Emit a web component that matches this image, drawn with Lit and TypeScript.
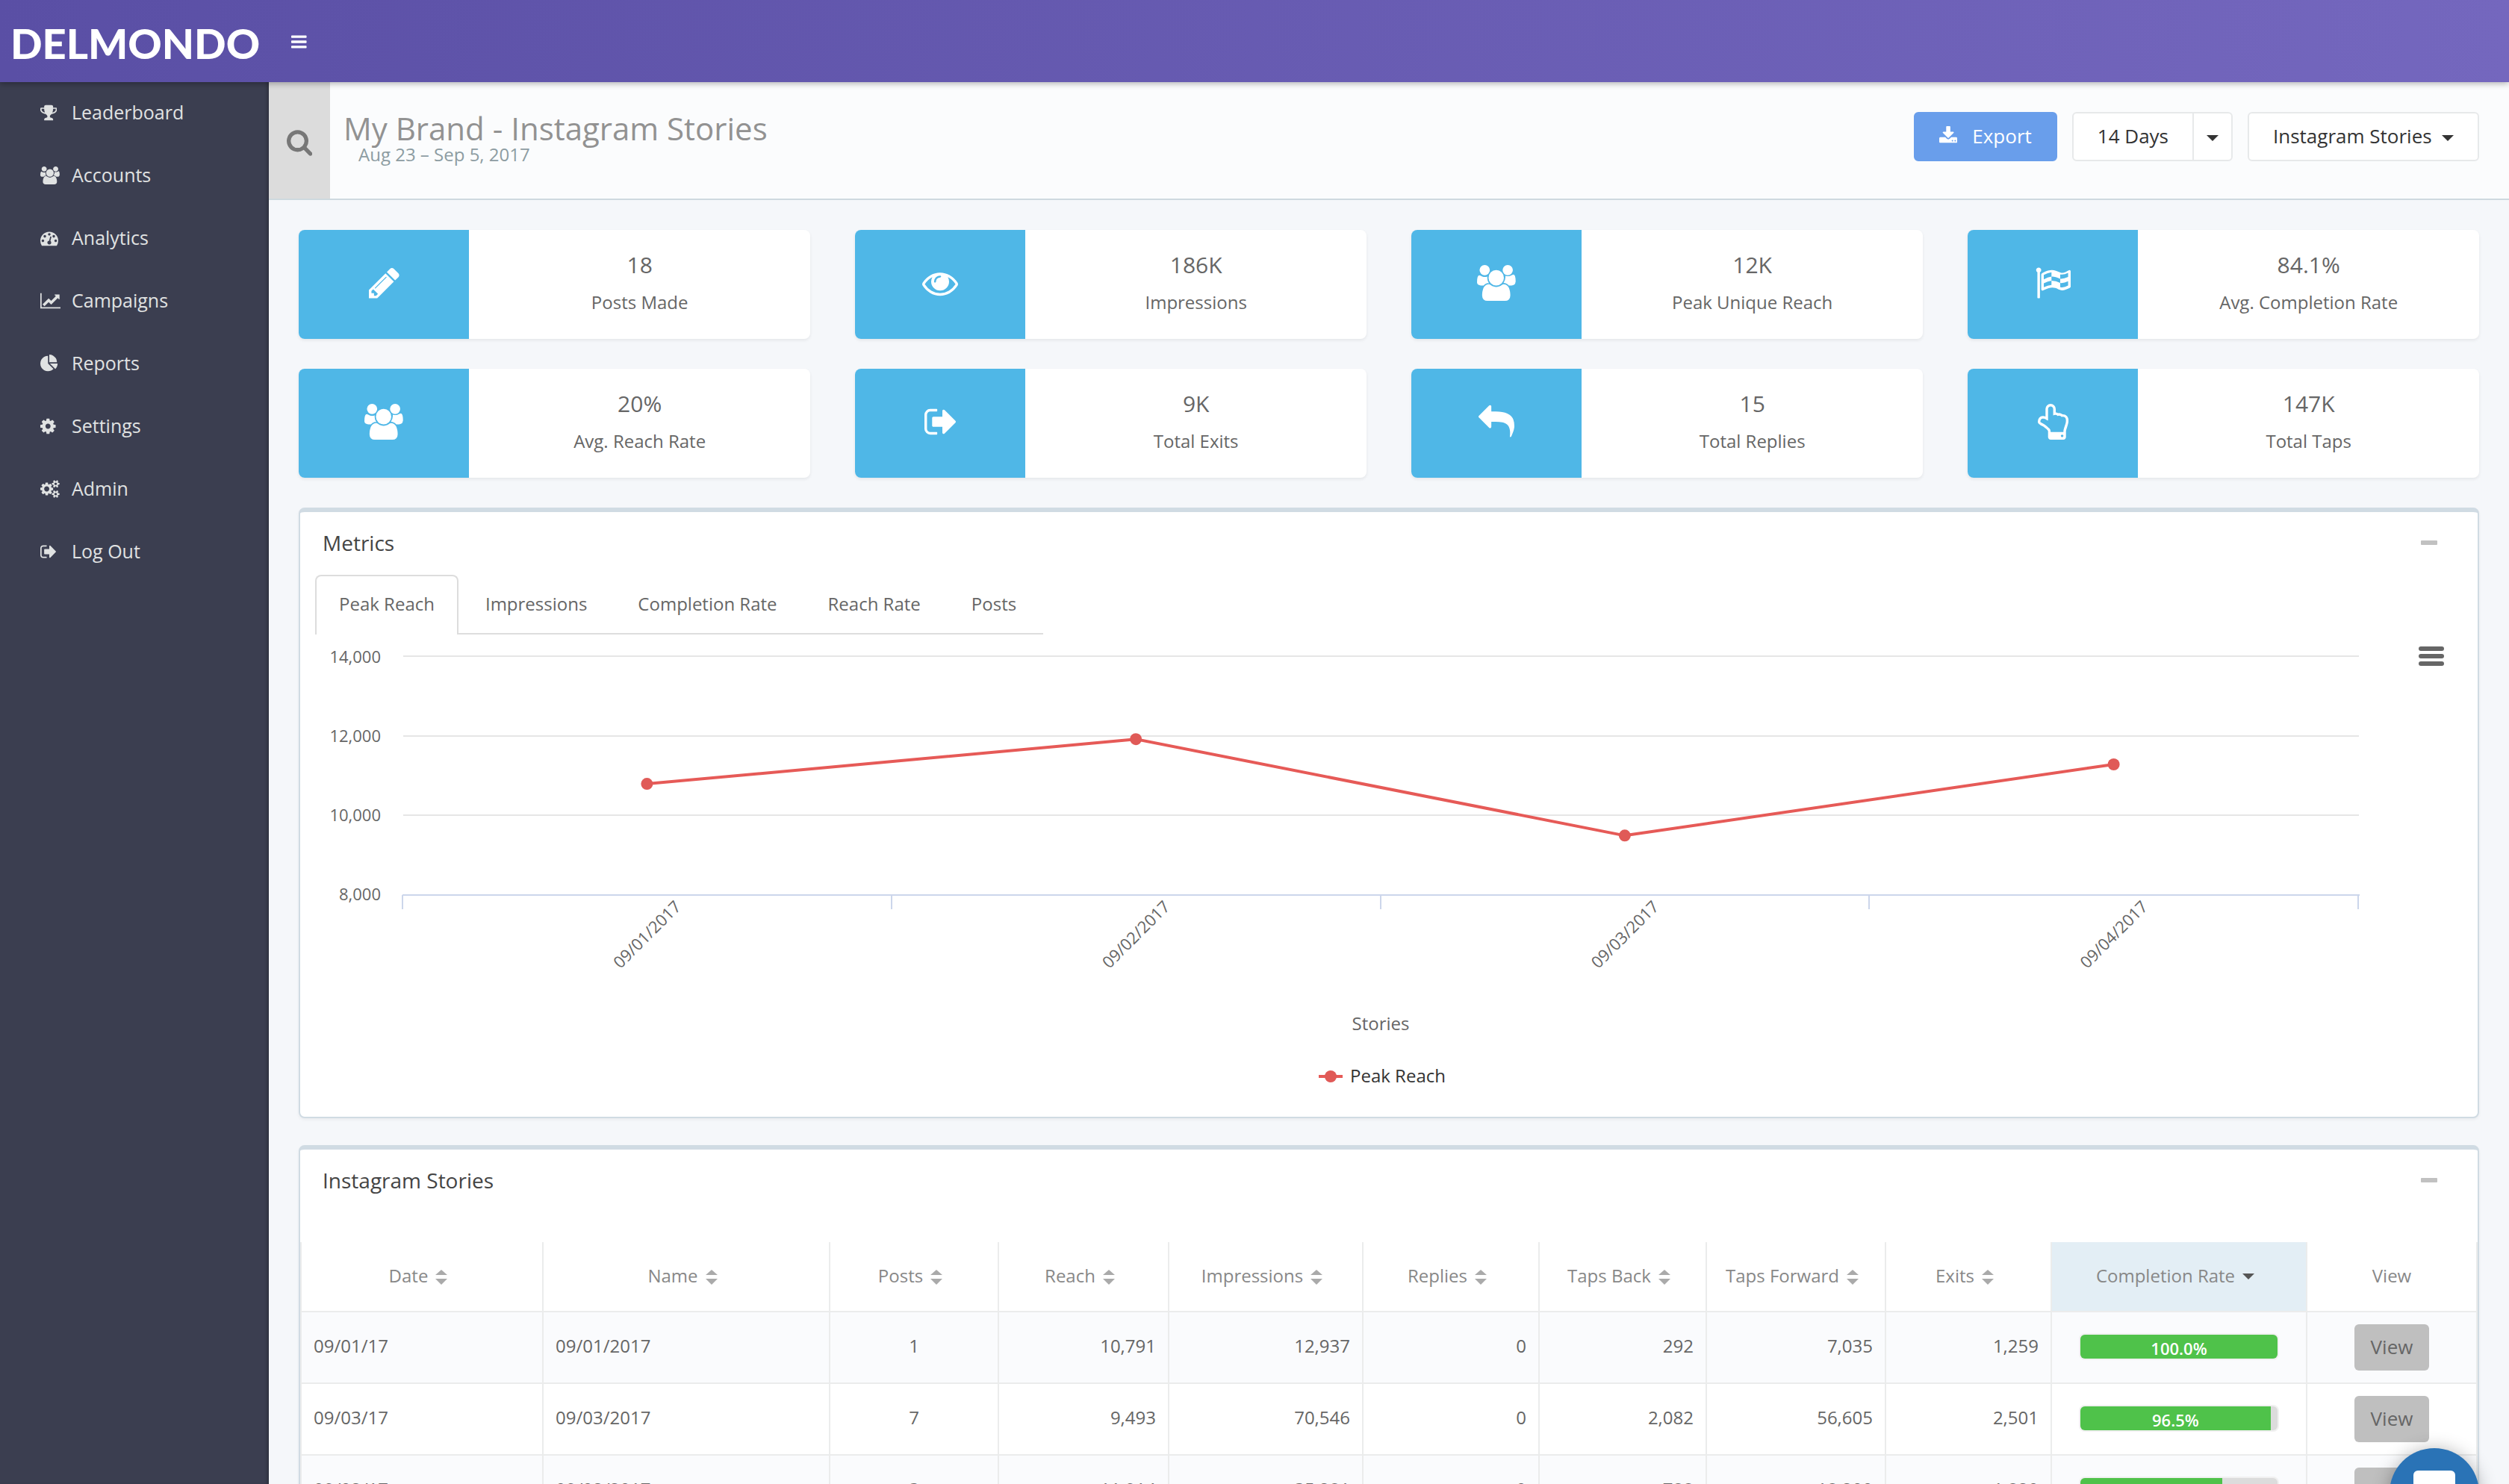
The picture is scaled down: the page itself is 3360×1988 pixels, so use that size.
import { LitElement, html, svg, css, nothing } from "lit";
import { customElement, property, state } from "lit/decorators.js";
import { classMap } from "lit/directives/class-map.js";

interface Glyph {
  box: string;
  path: string;
  cut?: string;
}

const GLYPHS: Record<string, Glyph> = {
  trophy: {
    box: "64 0 1664 1792",
    path: "M522 883q-74-162-74-371h-256v96q0 78 94.5 162t235.5 113zm1078-275v-96h-256q0 209-74 371 141-29 235.5-113t94.5-162zm128-128v128q0 71-41.5 143t-112 130-173 97.5-215.5 44.5q-42 54-95 95-38 34-52.5 72.5t-14.5 89.5q0 54 30.5 91t97.5 37q75 0 133.5 45.5t58.5 114.5v64q0 14-9 23t-23 9h-832q-14 0-23-9t-9-23v-64q0-69 58.5-114.5t133.5-45.5q67 0 97.5-37t30.5-91q0-51-14.5-89.5t-52.5-72.5q-53-41-95-95-113-5-215.5-44.5t-173-97.5-112-130-41.5-143v-128q0-40 28-68t68-28h288v-96q0-66 47-113t113-47h576q66 0 113 47t47 113v96h288q40 0 68 28t28 68z",
  },
  users: {
    box: "64 0 1920 1792",
    path: "M657 896q-162 5-265 128h-134q-82 0-138-40.5t-56-118.5q0-353 124-353 6 0 43.5 21t97.5 42.5 119 21.5q67 0 133-23-5 37-5 66 0 159 93 293zm1071 637q0 120-73 189.5t-194 69.5h-874q-121 0-194-69.5t-73-189.5q0-53 3.5-103.5t14-109 26.5-108.5 43-97.5 62-81 85.5-53.5 111.5-20q10 0 43 21.5t73 48 107 48 135 21.5 135-21.5 107-48 73-48 43-21.5q61 0 111.5 20t85.5 53.5 62 81 43 97.5 26.5 108.5 14 109 3.5 103.5zm-1024-1277q0 106-75 181t-181 75-181-75-75-181 75-181 181-75 181 75 75 181zm704 384q0 159-112.5 271.5t-271.5 112.5-271.5-112.5-112.5-271.5 112.5-271.5 271.5-112.5 271.5 112.5 112.5 271.5zm576 225q0 78-56 118.5t-138 40.5h-134q-103-123-265-128 93-134 93-293 0-29-5-66 66 23 133 23 59 0 119-21.5t97.5-42.5 43.5-21q124 0 124 353zm-128-609q0 106-75 181t-181 75-181-75-75-181 75-181 181-75 181 75 75 181z",
  },
  gauge: {
    box: "0 0 1792 1792",
    path: "M384 1152q0-53-37.5-90.5t-90.5-37.5-90.5 37.5-37.5 90.5 37.5 90.5 90.5 37.5 90.5-37.5 37.5-90.5zm192-448q0-53-37.5-90.5t-90.5-37.5-90.5 37.5-37.5 90.5 37.5 90.5 90.5 37.5 90.5-37.5 37.5-90.5zm428 481l101-382q6-26-7.5-48.5t-38.5-29.5-48 6.5-30 39.5l-101 382q-60 5-107 43.5t-63 98.5q-20 77 20 146t117 89 146-20 89-117q16-60-6-117t-72-91zm660-33q0-53-37.5-90.5t-90.5-37.5-90.5 37.5-37.5 90.5 37.5 90.5 90.5 37.5 90.5-37.5 37.5-90.5zm-640-640q0-53-37.5-90.5t-90.5-37.5-90.5 37.5-37.5 90.5 37.5 90.5 90.5 37.5 90.5-37.5 37.5-90.5zm448 192q0-53-37.5-90.5t-90.5-37.5-90.5 37.5-37.5 90.5 37.5 90.5 90.5 37.5 90.5-37.5 37.5-90.5zm320 448q0 261-141 483-19 29-54 29h-1402q-35 0-54-29-141-221-141-483 0-182 71-348t191-286 286-191 348-71 348 71 286 191 191 286 71 348z",
  },
  chart: {
    box: "0 0 2048 1792",
    path: "M2048 1536v128h-2048v-1536h128v1408h1920zm-128-1248v435q0 21-19.5 29.5t-35.5-7.5l-121-121-633 633q-10 10-23 10t-23-10l-233-233-416 416-192-192 585-585q10-10 23-10t23 10l233 233 464-464-121-121q-16-16-7.5-35.5t29.5-19.5h435q14 0 23 9t9 23z",
  },
  pie: {
    box: "0 0 1792 1792",
    path: "M768 890l546 546q-106 108-247.5 168t-298.5 60q-209 0-385.5-103t-279.5-279.5-103-385.5 103-385.5 279.5-279.5 385.5-103v762zm187 6h773q0 157-60 298.5t-168 247.5zm709-128h-768v-768q209 0 385.5 103t279.5 279.5 103 385.5z",
  },
  cog: {
    box: "128 0 1536 1792",
    path: "M1152 896q0-106-75-181t-181-75-181 75-75 181 75 181 181 75 181-75 75-181zm512-109v222q0 12-8 23t-20 13l-185 28q-19 54-39 91 35 50 107 138 10 12 10 25t-9 23q-27 37-99 108t-94 71q-12 0-26-9l-138-108q-44 23-91 38-16 136-29 186-7 28-36 28h-222q-14 0-24.5-8.5t-11.5-21.5l-28-184q-49-16-90-37l-141 107q-10 9-25 9-14 0-25-11-126-114-165-168-7-10-7-23 0-12 8-23 15-21 51-66.5t54-70.5q-27-50-41-99l-183-27q-13-2-21-12.5t-8-23.5v-222q0-12 8-23t19-13l186-28q14-46 39-92-40-57-107-138-10-12-10-24 0-10 9-23 26-36 98.5-107.5t94.5-71.5q13 0 26 10l138 107q44-23 91-38 16-136 29-186 7-28 36-28h222q14 0 24.5 8.5t11.5 21.5l28 184q49 16 90 37l142-107q9-9 24-9 13 0 25 10 129 119 165 170 7 8 7 22 0 12-8 23-15 21-51 66.5t-54 70.5q26 50 41 98l183 28q13 2 21 12.5t8 23.5z",
  },
  cogs: {
    box: "0 0 1920 1792",
    path: "M896 896q0-106-75-181t-181-75-181 75-75 181 75 181 181 75 181-75 75-181zm768 512q0-52-38-90t-90-38-90 38-38 90q0 53 37.5 90.5t90.5 37.5 90.5-37.5 37.5-90.5zm0-1024q0-52-38-90t-90-38-90 38-38 90q0 53 37.5 90.5t90.5 37.5 90.5-37.5 37.5-90.5zm-384 421v185q0 10-7 19.5t-16 10.5l-155 24q-11 35-32 76 34 48 90 115 7 11 7 20 0 12-7 19-23 30-82.5 89.5t-78.5 59.5q-11 0-21-7l-115-90q-37 19-77 31-11 108-23 155-7 24-30 24h-186q-11 0-20-7.5t-10-17.5l-23-153q-34-10-75-31l-118 89q-7 7-20 7-11 0-21-8-144-133-144-160 0-9 7-19 10-14 41-53t47-61q-23-44-35-82l-152-24q-10-1-17-9.5t-7-19.5v-185q0-10 7-19.5t16-10.5l155-24q11-35 32-76-34-48-90-115-7-11-7-20 0-12 7-20 22-30 82-89t79-59q11 0 21 7l115 90q34-18 77-32 11-108 23-154 7-24 30-24h186q11 0 20 7.5t10 17.5l23 153q34 10 75 31l118-89q8-7 20-7 11 0 21 8 144 133 144 160 0 8-7 19-12 16-42 54t-45 60q23 48 34 82l152 23q10 2 17 10.5t7 19.5zm640 533v140q0 16-149 31-12 27-30 52 51 113 51 138 0 4-4 7-122 71-124 71-8 0-46-47t-52-68q-20 2-30 2t-30-2q-14 21-52 68t-46 47q-2 0-124-71-4-3-4-7 0-25 51-138-18-25-30-52-149-15-149-31v-140q0-16 149-31 13-29 30-52-51-113-51-138 0-4 4-7 4-2 35-20t59-34 30-16q8 0 46 46.5t52 67.5q20-2 30-2t30 2q51-71 92-112l6-2q4 0 124 70 4 3 4 7 0 25-51 138 17 23 30 52 149 15 149 31zm0-1024v140q0 16-149 31-12 27-30 52 51 113 51 138 0 4-4 7-122 71-124 71-8 0-46-47t-52-68q-20 2-30 2t-30-2q-14 21-52 68t-46 47q-2 0-124-71-4-3-4-7 0-25 51-138-18-25-30-52-149-15-149-31v-140q0-16 149-31 13-29 30-52-51-113-51-138 0-4 4-7 4-2 35-20t59-34 30-16q8 0 46 46.5t52 67.5q20-2 30-2t30 2q51-71 92-112l6-2q4 0 124 70 4 3 4 7 0 25-51 138 17 23 30 52 149 15 149 31z",
  },
  exit: {
    box: "64 0 1600 1792",
    path: "M704 1440q0 4 1 20t.5 26.5-3 23.5-10 19.5-20.5 6.5h-320q-119 0-203.5-84.5t-84.5-203.5v-704q0-119 84.5-203.5t203.5-84.5h320q13 0 22.5 9.5t9.5 22.5q0 4 1 20t.5 26.5-3 23.5-10 19.5-20.5 6.5h-320q-66 0-113 47t-47 113v704q0 66 47 113t113 47h312l11.5 1 11.5 3 8 5.5 7 9 2 13.5zm928-544q0 26-19 45l-544 544q-19 19-45 19t-45-19-19-45v-288h-448q-26 0-45-19t-19-45v-384q0-26 19-45t45-19h448v-288q0-26 19-45t45-19 45 19l544 544q19 19 19 45z",
  },
  search: {
    box: "64 64 1664 1792",
    path: "M1216 832q0-185-131.5-316.5t-316.5-131.5-316.5 131.5-131.5 316.5 131.5 316.5 316.5 131.5 316.5-131.5 131.5-316.5zm512 832q0 52-38 90t-90 38q-54 0-90-38l-343-342q-179 124-399 124-143 0-273.5-55.5t-225-150-150-225-55.5-273.5 55.5-273.5 150-225 225-150 273.5-55.5 273.5 55.5 225 150 150 225 55.5 273.5q0 220-124 399l343 343q37 37 37 90z",
  },
  bars: {
    box: "128 0 1536 1792",
    path: "M1664 1344v128q0 26-19 45t-45 19h-1408q-26 0-45-19t-19-45v-128q0-26 19-45t45-19h1408q26 0 45 19t19 45zm0-512v128q0 26-19 45t-45 19h-1408q-26 0-45-19t-19-45v-128q0-26 19-45t45-19h1408q26 0 45 19t19 45zm0-512v128q0 26-19 45t-45 19h-1408q-26 0-45-19t-19-45v-128q0-26 19-45t45-19h1408q26 0 45 19t19 45z",
  },
  download: {
    box: "64 0 1664 1792",
    path: "M1344 1344q0-26-19-45t-45-19-45 19-19 45 19 45 45 19 45-19 19-45zm256 0q0-26-19-45t-45-19-45 19-19 45 19 45 45 19 45-19 19-45zm128-224v320q0 40-28 68t-68 28h-1472q-40 0-68-28t-28-68v-320q0-40 28-68t68-28h465l135 136q58 56 136 56t136-56l136-136h464q40 0 68 28t28 68zm-325-569q17 41-14 70l-448 448q-18 19-45 19t-45-19l-448-448q-31-29-14-70 17-39 59-39h256v-448q0-26 19-45t45-19h256q26 0 45 19t19 45v448h256q42 0 59 39z",
  },
  pencil: {
    box: "128 0 1536 1792",
    path: "M491 1536l91-91-235-235-91 91v107h128v128h107zm523-928q0-22-22-22-10 0-17 7l-542 542q-7 7-7 17 0 22 22 22 10 0 17-7l542-542q7-7 7-17zm-54-192l416 416-832 832h-416v-416zm683 96q0 53-37 90l-166 166-416-416 166-165q36-38 90-38 53 0 91 38l235 234q37 39 37 91z",
  },
  eye: {
    box: "0 0 1792 1792",
    path: "M1664 960q-152-236-381-353 61 104 61 225 0 185-131.5 316.5t-316.5 131.5-316.5-131.5-131.5-316.5q0-121 61-225-229 117-381 353 133 205 333.5 326.5t434.5 121.5 434.5-121.5 333.5-326.5zm-720-384q0-20-14-34t-34-14q-125 0-214.5 89.5t-89.5 214.5q0 20 14 34t34 14 34-14 14-34q0-86 61-147t147-61q20 0 34-14t14-34zm848 384q0 34-20 69-140 230-376.5 368.5t-499.5 138.5-499.5-139-376.5-368q-20-35-20-69t20-69q140-229 376.5-368t499.5-139 499.5 139 376.5 368q20 35 20 69z",
  },
  reply: {
    box: "0 0 1792 1792",
    path: "M1792 1120q0 166-127 451-3 7-10.5 24t-13.5 30-13 22q-12 17-28 17-15 0-23.5-10t-8.5-25q0-9 2.5-26.5t2.5-23.5q5-68 5-123 0-101-17.5-181t-48.5-138.5-80-101-105.5-69.5-133-42.5-154-21.5-175.5-6h-224v256q0 26-19 45t-45 19-45-19l-512-512q-19-19-19-45t19-45l512-512q19-19 45-19t45 19 19 45v256h224q713 0 875 403 53 134 53 333z",
  },
  hand: {
    box: "128 0 1536 1792",
    path: "M1408 1600q0-26-19-45t-45-19-45 19-19 45 19 45 45 19 45-19 19-45zm128-764q0-189-167-189-26 0-56 5-16-30-52.5-47.5t-73.5-17.5-69 18q-50-53-119-53-25 0-55.5 10t-47.5 25v-331q0-52-38-90t-90-38q-51 0-89.5 39t-38.5 89v576q-20 0-48.5-15t-55-33-68-33-84.5-15q-67 0-97.5 44.5t-30.5 115.5q0 24 139 90 44 24 65 37 64 40 145 112 81 71 106 101 57 69 57 140v32h640v-32q0-72 32-167t64-193.5 32-179.5zm128-5q0 133-69 322-59 164-59 223v288q0 53-37.5 90.5t-90.5 37.5h-640q-53 0-90.5-37.5t-37.5-90.5v-288q0-10-4.5-21.5t-14-23.5-18-22.5-22.5-24-21.5-20.5-21.5-19-17-14q-74-65-129-100-21-13-62-33t-72-37-63-40.5-49.5-55-17.5-69.5q0-125 67-206.5t189-81.5q68 0 128 22v-374q0-104 76-180t179-76q105 0 181 75.5t76 180.5v169q62 4 119 37 21-3 43-3 101 0 178 60 139-1 219.5 85t80.5 227z",
  },
  flag: {
    box: "0 0 1792 1792",
    path: "M320 256q0 72-64 110v1266q0 13-9.5 22.5t-22.5 9.5h-64q-13 0-22.5-9.5t-9.5-22.5v-1266q-64-38-64-110 0-53 37.5-90.5t90.5-37.5 90.5 37.5 37.5 90.5zm1472 64v763q0 25-12.5 38.5t-39.5 27.5q-215 116-369 116-61 0-123.5-22t-108.5-48-115.5-48-142.5-22q-192 0-464 146-17 9-33 9-26 0-45-19t-19-45v-742q0-32 31-55 21-14 79-43 236-120 421-120 107 0 200 29t219 88q38 19 88 19 54 0 117.5-21t110-47 88-47 54.5-21q26 0 45 19t19 45z",
    cut: "M448 498Q650 395 832 368V580Q650 605 448 714zM832 580Q1000 565 1270 690V900Q1050 790 832 785zM1270 472Q1450 505 1664 395V600Q1450 705 1270 690zM448 918Q650 805 832 785V998Q650 1015 448 1110zM1270 900Q1450 920 1664 812V1028Q1450 1155 1270 1108z",
  },
};

/** Single-colour pictogram; its height is the host's font size. */
@customElement("ui-icon")
export class UiIcon extends LitElement {
  @property() name = "";

  static styles = css`
    :host {
      display: inline-flex;
      flex: none;
    }
    .glyph {
      height: 1em;
      fill: currentColor;
    }
    .cut {
      fill: #4fb7e7;
    }
  `;

  render() {
    const g = GLYPHS[this.name];
    if (!g) return nothing;
    return html`<svg class="glyph" viewBox=${g.box} aria-hidden="true">
      <path d=${g.path}></path>
      ${g.cut ? svg`<path class="cut" d=${g.cut}></path>` : nothing}
    </svg>`;
  }
}

/** Line chart of one daily series with tilted date labels. */
@customElement("reach-chart")
export class ReachChart extends LitElement {
  @property({ attribute: false }) points: { label: string; value: number }[] = [];

  static styles = css`
    :host {
      display: block;
      position: relative;
    }
    .plot {
      display: block;
      width: 100%;
      height: auto;
      font-family: "Open Sans", sans-serif;
    }
    .grid {
      stroke: #e6e6e6;
      stroke-width: 2;
    }
    .axis {
      stroke: #ccd6eb;
      stroke-width: 2;
    }
    .series {
      fill: none;
      stroke: #e65a57;
      stroke-width: 4;
      stroke-linejoin: round;
    }
    .dot {
      fill: #e05a57;
    }
    .tick {
      font-size: 22px;
      fill: #666;
    }
    .title {
      font-size: 24px;
      fill: #666;
    }
    .legend {
      font-size: 24px;
      fill: #333;
    }
    .menu {
      position: absolute;
      top: 16px;
      right: 45px;
      display: flex;
      flex-direction: column;
      gap: 4px;
      width: 34px;
      padding: 0;
      border: 0;
      background: none;
    }
    .bar {
      height: 6px;
      border-radius: 3px;
      background: #666;
    }
  `;

  render() {
    const left = 138;
    const right = 2757;
    const base = 349;
    const step = 106;
    const slot = (right - left) / this.points.length;
    const px = (i: number) => left + slot * (i + 0.5) - 1;
    const py = (v: number) => base - ((v - 8000) / 2000) * 106.7;
    const rows = [0, 1, 2, 3];
    return html`
      <svg class="plot" viewBox="0 0 2916 646" role="img" aria-label="Peak Reach">
        ${rows.map(
          (r) => svg`
            ${r ? svg`<path class="grid" d="M${left} ${base - Math.round(r * 106.7)}H${right}"></path>` : nothing}
            <text class="tick" text-anchor="end" x="108" y=${base + 7 - r * step}>${(8000 + r * 2000).toLocaleString("en-US")}</text>`
        )}
        <path class="axis" d="M${left - 1} ${base}H${right + 1}"></path>
        ${[...this.points, null].map(
          (_, i) => svg`<path class="axis" d="M${Math.round(left + slot * i) - 1} ${base}v19"></path>`
        )}
        <polyline class="series" points=${this.points.map((p, i) => `${px(i)},${py(p.value)}`).join(" ")}></polyline>
        ${this.points.map(
          (p, i) => svg`
            <circle class="dot" cx=${px(i)} cy=${py(p.value)} r="8"></circle>
            <text class="tick" text-anchor="end" transform="translate(${px(i) + 47} 366) rotate(-45)">${p.label}</text>`
        )}
        <text class="title" text-anchor="middle" x="1447" y="530">Stories</text>
        <path class="series" d="M1364 592h32"></path>
        <circle class="dot" cx="1380" cy="592" r="8"></circle>
        <text class="legend" x="1406" y="600">Peak Reach</text>
      </svg>
      <button class="menu" aria-label="Chart menu">
        <span class="bar"></span><span class="bar"></span><span class="bar"></span>
      </button>
    `;
  }
}

const NAV = [
  { icon: "trophy", label: "Leaderboard" },
  { icon: "users", label: "Accounts" },
  { icon: "gauge", label: "Analytics" },
  { icon: "chart", label: "Campaigns" },
  { icon: "pie", label: "Reports" },
  { icon: "cog", label: "Settings" },
  { icon: "cogs", label: "Admin" },
  { icon: "exit", label: "Log Out" },
];

const STATS = [
  { icon: "pencil", value: "18", label: "Posts Made" },
  { icon: "eye", value: "186K", label: "Impressions" },
  { icon: "users", value: "12K", label: "Peak Unique Reach" },
  { icon: "flag", value: "84.1%", label: "Avg. Completion Rate" },
  { icon: "users", value: "20%", label: "Avg. Reach Rate" },
  { icon: "exit", value: "9K", label: "Total Exits" },
  { icon: "reply", value: "15", label: "Total Replies" },
  { icon: "hand", value: "147K", label: "Total Taps" },
];

const TABS = ["Peak Reach", "Impressions", "Completion Rate", "Reach Rate", "Posts"];

const SERIES = [
  { label: "09/01/2017", value: 10791 },
  { label: "09/02/2017", value: 11914 },
  { label: "09/03/2017", value: 9493 },
  { label: "09/04/2017", value: 11280 },
];

type Kind = "text" | "center" | "number" | "rate" | "action";

const COLUMNS: { label: string; weight: number; kind: Kind }[] = [
  { label: "Date", weight: 326, kind: "text" },
  { label: "Name", weight: 384, kind: "text" },
  { label: "Posts", weight: 226, kind: "center" },
  { label: "Reach", weight: 228, kind: "number" },
  { label: "Impressions", weight: 260, kind: "number" },
  { label: "Replies", weight: 236, kind: "number" },
  { label: "Taps Back", weight: 224, kind: "number" },
  { label: "Taps Forward", weight: 240, kind: "number" },
  { label: "Exits", weight: 222, kind: "number" },
  { label: "Completion Rate", weight: 342, kind: "rate" },
  { label: "View", weight: 228, kind: "action" },
];

const TOTAL_WEIGHT = COLUMNS.reduce((sum, c) => sum + c.weight, 0);

const ROWS: { cells: string[]; rate: number }[] = [
  { cells: ["09/01/17", "09/01/2017", "1", "10,791", "12,937", "0", "292", "7,035", "1,259"], rate: 100 },
  { cells: ["09/03/17", "09/03/2017", "7", "9,493", "70,546", "0", "2,082", "56,605", "2,501"], rate: 96.5 },
  { cells: ["09/02/17", "09/02/2017", "3", "11,914", "35,281", "0", "788", "18,200", "1,820"], rate: 72 },
];

@customElement("app-root")
export class AppRoot extends LitElement {
  @state() private tab = TABS[0];

  static styles = css`
    :host {
      display: flex;
      flex-direction: column;
      height: 100vh;
      overflow: hidden;
      background: #f5f7fa;
      color: #666;
      font-family: "Open Sans", sans-serif;
      font-size: 24px;
    }
    * {
      box-sizing: border-box;
    }
    button,
    select {
      font: inherit;
      color: inherit;
      cursor: pointer;
    }
    .topbar {
      position: relative;
      z-index: 2;
      flex: none;
      display: flex;
      align-items: center;
      height: 110px;
      background: linear-gradient(90deg, #5a4fa5, #7467be);
      box-shadow: 0 2px 8px rgba(0, 0, 0, 0.3);
      color: #fff;
    }
    .brand {
      width: 360px;
      padding: 6px 0 0 14px;
      color: inherit;
      font: 900 56px/60px Lato, sans-serif;
      text-decoration: none;
    }
    .toggle {
      display: flex;
      padding: 2px 30px 0;
      border: 0;
      background: none;
      color: inherit;
      font-size: 24px;
    }
    .body {
      flex: 1;
      display: flex;
      min-height: 0;
    }
    .sidebar {
      flex: none;
      width: 360px;
      background: #3b3e50;
      box-shadow: inset -4px 0 4px -2px rgba(0, 0, 0, 0.25);
    }
    .nav {
      margin: 0;
      padding: 0;
      list-style: none;
    }
    .link {
      display: flex;
      align-items: center;
      height: 84px;
      padding: 0 0 4px 54px;
      color: #e0e2e2;
      font-size: 25px;
      font-weight: 500;
      text-decoration: none;
    }
    .slot {
      display: flex;
      width: 42px;
      padding-top: 2px;
      font-size: 24px;
    }
    .main {
      flex: 1;
      min-width: 0;
    }
    .pagehead {
      display: flex;
      align-items: flex-start;
      height: 158px;
      padding-right: 40px;
      border-bottom: 2px solid #ced9df;
      background: #fbfcfd;
    }
    .search {
      align-self: stretch;
      display: flex;
      align-items: center;
      justify-content: center;
      width: 82px;
      padding: 6px 0 0;
      border: 0;
      background: #dcdcdc;
      color: #777;
      font-size: 37px;
    }
    .heading {
      flex: 1;
      padding: 41px 18px 0;
    }
    .title {
      margin: 0;
      color: #929292;
      font-size: 42px;
      font-weight: 400;
      line-height: 42px;
    }
    .range {
      margin: 0;
      padding-left: 20px;
      color: #8d9ca2;
      line-height: 28px;
    }
    .actions {
      display: flex;
      gap: 20px;
      padding-top: 40px;
      color: #333;
      font-size: 26px;
    }
    .btn {
      display: flex;
      align-items: center;
      height: 66px;
      padding: 0 32px 2px;
      border: 2px solid #e7e9ea;
      border-radius: 6px;
      background: #fff;
    }
    .btn.primary {
      gap: 20px;
      border-color: #699eeb;
      background: #699eeb;
      color: #fff;
    }
    .group {
      display: flex;
    }
    .btn.first {
      border-radius: 6px 0 0 6px;
    }
    .btn.last {
      margin-left: -2px;
      padding: 4px 17px 0;
      border-radius: 0 6px 6px 0;
    }
    .caret {
      width: 16px;
      height: 8px;
      background: #333;
      clip-path: polygon(0 0, 100% 0, 50% 100%);
    }
    .picker {
      display: grid;
      align-items: center;
    }
    .picker > * {
      grid-area: 1 / 1;
    }
    .picker .btn {
      appearance: none;
      padding-right: 61px;
    }
    .picker .caret {
      justify-self: end;
      margin: 4px 34px 0 0;
      pointer-events: none;
    }
    .content {
      display: flex;
      flex-direction: column;
      gap: 36px;
      padding: 40px;
    }
    .stats {
      display: grid;
      grid-template-columns: repeat(4, 1fr);
      gap: 40px 60px;
      margin-bottom: 4px;
    }
    .stat {
      display: grid;
      grid-template-columns: 1fr 2fr;
      height: 146px;
      overflow: hidden;
      border-radius: 8px;
      background: #fff;
      box-shadow: 0 2px 4px rgba(0, 0, 0, 0.07);
    }
    .badge {
      display: flex;
      align-items: center;
      justify-content: center;
      padding-bottom: 4px;
      background: #4fb7e7;
      color: #fff;
      font-size: 48px;
    }
    .figures {
      display: flex;
      flex-direction: column;
      justify-content: center;
      padding-bottom: 2px;
      text-align: center;
      line-height: 50px;
    }
    .value {
      font-size: 30px;
      font-weight: 500;
    }
    .panel {
      overflow: hidden;
      border: 2px solid #d0dbe3;
      border-top-width: 6px;
      border-radius: 8px;
      background: #fff;
      box-shadow: 0 2px 4px rgba(0, 0, 0, 0.05);
    }
    .panelhead {
      display: flex;
      align-items: center;
      justify-content: space-between;
      height: 84px;
      padding: 0 54px 2px 30px;
    }
    .paneltitle {
      margin: 0;
      color: #444;
      font-size: 28px;
      font-weight: 400;
    }
    .collapse {
      width: 22px;
      height: 6px;
      padding: 0;
      border: 0;
      border-radius: 1px;
      background: #c1c1c1;
    }
    .tabs {
      display: inline-flex;
      gap: 4px;
      margin-left: 20px;
      padding-right: 4px;
      box-shadow: inset 0 -2px #ddd;
      vertical-align: top;
    }
    .tab {
      height: 80px;
      padding: 0 30px 6px;
      border: 2px solid transparent;
      border-bottom: 0;
      border-radius: 8px 8px 0 0;
      background: none;
    }
    .tab.active {
      border-color: #ddd;
      background: #fff;
    }
    .tablewrap {
      padding-top: 40px;
    }
    .table {
      width: 100%;
      table-layout: fixed;
      border-collapse: separate;
      border-spacing: 0;
    }
    .table th,
    .table td {
      border-right: 2px solid #ebecec;
      border-bottom: 2px solid #ebecec;
      font-weight: 400;
    }
    .table th:first-child,
    .table td:first-child {
      border-left: 2px solid #ebecec;
    }
    .table th {
      height: 94px;
      padding: 0 0 4px;
      color: #888;
    }
    .table td {
      height: 96px;
      padding: 0 16px 6px;
    }
    .table th.sorted {
      background: #e3eef5;
    }
    .odd {
      background: #fafbfd;
    }
    .sort {
      display: flex;
      align-items: center;
      justify-content: center;
      gap: 10px;
      width: 100%;
      padding: 0 10px 0 0;
      border: 0;
      background: none;
    }
    .arrows {
      width: 16px;
      height: 20px;
      margin-top: 6px;
      fill: #aaa;
    }
    .arrows.down {
      fill: #555;
    }
    .center,
    .action {
      text-align: center;
    }
    .number {
      text-align: right;
    }
    .track {
      width: 264px;
      max-width: 100%;
      height: 32px;
      margin: 4px auto 0;
      overflow: hidden;
      border-radius: 6px;
      background: #dcdcdc;
      box-shadow: 0 0 0 2px #f1f1f1;
    }
    .fill {
      height: 100%;
      background: #4fc24a;
      color: #fff;
      font-size: 22px;
      font-weight: 600;
      line-height: 36px;
      text-align: center;
    }
    .view {
      height: 62px;
      margin-top: 6px;
      padding: 0 22px 2px;
      border: 0;
      border-radius: 6px;
      background: #bfbfbf;
      font-size: 26px;
      vertical-align: top;
    }
    .chat {
      position: fixed;
      right: 40px;
      bottom: -72px;
      z-index: 3;
      display: flex;
      justify-content: center;
      width: 120px;
      height: 120px;
      padding: 30px 0 0;
      border: 0;
      border-radius: 50%;
      background: #2a73b6;
      box-shadow: 0 2px 24px rgba(0, 0, 0, 0.3);
    }
    .bubble {
      width: 56px;
      height: 56px;
      fill: #fff;
    }
  `;

  private renderCell(kind: Kind, text: string, rate: number) {
    if (kind === "rate") {
      return html`<td>
        <div class="track"><div class="fill" style="width:${rate}%">${rate.toFixed(1)}%</div></div>
      </td>`;
    }
    if (kind === "action") {
      return html`<td class="action"><button class="view">View</button></td>`;
    }
    return html`<td class=${kind}>${text}</td>`;
  }

  private renderHead(label: string, kind: Kind) {
    const width = (COLUMNS.find((c) => c.label === label)!.weight / TOTAL_WEIGHT) * 100;
    if (kind === "action") return html`<th scope="col" style="width:${width}%">${label}</th>`;
    const sorted = kind === "rate";
    return html`<th scope="col" class=${classMap({ sorted })} style="width:${width}%">
      <button class="sort">
        ${label}
        <svg class=${classMap({ arrows: true, down: sorted })} viewBox="0 0 16 20" aria-hidden="true">
          <path d=${sorted ? "M0 5h16l-8 8z" : "M0 7h16l-8-7zM0 12h16l-8 8z"}></path>
        </svg>
      </button>
    </th>`;
  }

  render() {
    return html`
      <header class="topbar">
        <a class="brand" href="#">DELMONDO</a>
        <button class="toggle" aria-label="Toggle menu"><ui-icon name="bars"></ui-icon></button>
      </header>
      <div class="body">
        <nav class="sidebar">
          <ul class="nav">
            ${NAV.map(
              (n) => html`<li>
                <a class="link" href="#"><span class="slot"><ui-icon name=${n.icon}></ui-icon></span>${n.label}</a>
              </li>`
            )}
          </ul>
        </nav>
        <main class="main">
          <div class="pagehead">
            <button class="search" aria-label="Search"><ui-icon name="search"></ui-icon></button>
            <div class="heading">
              <h1 class="title">My Brand - Instagram Stories</h1>
              <p class="range">Aug 23 – Sep 5, 2017</p>
            </div>
            <div class="actions">
              <button class="btn primary"><ui-icon name="download"></ui-icon>Export</button>
              <div class="group">
                <button class="btn first">14 Days</button>
                <button class="btn last" aria-label="Choose period"><span class="caret"></span></button>
              </div>
              <div class="picker">
                <select class="btn" aria-label="Channel">
                  <option>Instagram Stories</option>
                </select>
                <span class="caret"></span>
              </div>
            </div>
          </div>
          <div class="content">
            <section class="stats">
              ${STATS.map(
                (s) => html`<div class="stat">
                  <div class="badge"><ui-icon name=${s.icon}></ui-icon></div>
                  <div class="figures"><span class="value">${s.value}</span><span>${s.label}</span></div>
                </div>`
              )}
            </section>
            <section class="panel">
              <div class="panelhead">
                <h2 class="paneltitle">Metrics</h2>
                <button class="collapse" aria-label="Collapse"></button>
              </div>
              <div class="tabs" role="tablist">
                ${TABS.map(
                  (t) => html`<button
                    role="tab"
                    aria-selected=${t === this.tab}
                    class=${classMap({ tab: true, active: t === this.tab })}
                    @click=${() => (this.tab = t)}
                  >
                    ${t}
                  </button>`
                )}
              </div>
              <reach-chart .points=${SERIES}></reach-chart>
            </section>
            <section class="panel">
              <div class="panelhead">
                <h2 class="paneltitle">Instagram Stories</h2>
                <button class="collapse" aria-label="Collapse"></button>
              </div>
              <div class="tablewrap">
                <table class="table">
                  <thead>
                    <tr>
                      ${COLUMNS.map((c) => this.renderHead(c.label, c.kind))}
                    </tr>
                  </thead>
                  <tbody>
                    ${ROWS.map(
                      (r, i) => html`<tr class=${classMap({ odd: i % 2 === 0 })}>
                        ${COLUMNS.map((c, j) => this.renderCell(c.kind, r.cells[j] ?? "", r.rate))}
                      </tr>`
                    )}
                  </tbody>
                </table>
              </div>
            </section>
          </div>
        </main>
      </div>
      <button class="chat" aria-label="Open chat">
        <svg class="bubble" viewBox="0 0 56 56" aria-hidden="true">
          <path d="M6 0h44a6 6 0 0 1 6 6v48l-12-8H6a6 6 0 0 1-6-6V6a6 6 0 0 1 6-6z"></path>
        </svg>
      </button>
    `;
  }
}
